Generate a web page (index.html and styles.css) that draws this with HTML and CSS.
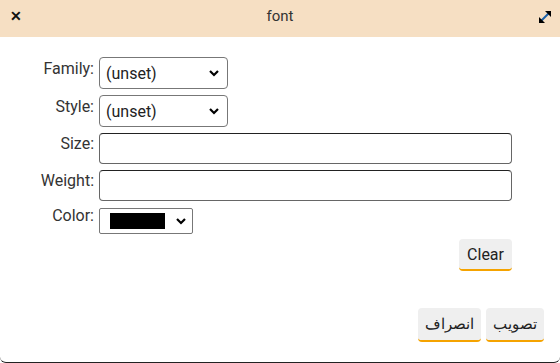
FILE: index.html
```html
<!DOCTYPE html>
<html lang="en">
<head>
    <meta charset="UTF-8">
    <title>font</title>
    <link rel="stylesheet" href="styles.css">
</head>
<body>
    <div class="dialog">
        <div class="titlebar">
            <span class="close">&#x2715;</span>
            <span class="title">font</span>
            <svg class="expand" width="14" height="14" viewBox="0 0 14 14">
                <path d="M3 11 L11 3" stroke="#1a5fa8" stroke-width="2"/>
                <path d="M1 13 L1 7 L7 13 Z" fill="#000"/>
                <path d="M13 1 L13 7 L7 1 Z" fill="#000"/>
            </svg>
        </div>
        <div class="content">
            <div class="form">
                <label for="family">Family:</label>
                <select id="family" class="sel"><option>(unset)</option></select>
                <label for="style">Style:</label>
                <select id="style" class="sel"><option>(unset)</option></select>
                <label for="size">Size:</label>
                <input type="text" id="size" class="txt">
                <label for="weight">Weight:</label>
                <input type="text" id="weight" class="txt">
                <label>Color:</label>
                <div class="color-sel"><span class="swatch"></span></div>
            </div>
            <div class="clear-row">
                <button class="btn">Clear</button>
            </div>
        </div>
        <div class="footer">
            <button class="btn" dir="rtl">انصراف</button>
            <button class="btn" dir="rtl">تصويب</button>
        </div>
    </div>
</body>
</html>
```

FILE: styles.css
```css
body {
    margin: 0;
    font-family: Roboto, "Noto Sans", sans-serif;
    background: #fff;
}
.dialog {
    width: 560px;
    height: 363px;
    display: flex;
    flex-direction: column;
    box-sizing: border-box;
    border-bottom: 1px solid #222;
    border-radius: 0 0 6px 6px;
}
.titlebar {
    height: 37px;
    background: #f6dfc3;
    display: flex;
    align-items: center;
    justify-content: space-between;
    padding: 0 8px 6px 10px;
    box-sizing: border-box;
}
.close {
    font-size: 14px;
    font-weight: bold;
    color: #111;
}
.title {
    font-size: 15px;
    color: #333;
}
.expand {
    margin-top: 2px;
}
.content {
    padding: 20px 48px 0 20px;
}
.form {
    display: grid;
    grid-template-columns: 74px 1fr;
    column-gap: 5px;
    row-gap: 6px;
    align-items: center;
}
label {
    text-align: right;
    font-size: 16px;
    color: #333;
    margin-top: -10px;
}
.sel {
    appearance: none;
    width: 129px;
    height: 32px;
    font-family: inherit;
    font-size: 16px;
    color: #222;
    padding: 0 6px;
    border: 1px solid #777;
    border-radius: 4px;
    background: #fff url("data:image/svg+xml,%3Csvg xmlns='http://www.w3.org/2000/svg' width='10' height='7'%3E%3Cpath d='M1 1 L5 5 L9 1' stroke='%23000' stroke-width='2.2' fill='none'/%3E%3C/svg%3E") no-repeat right 8px center;
}
.txt {
    height: 31px;
    box-sizing: border-box;
    border: 1px solid #666;
    border-top-color: #222;
    border-radius: 4px;
}
.color-sel {
    width: 94px;
    height: 26px;
    box-sizing: border-box;
    border: 1px solid #777;
    border-radius: 2px;
    display: flex;
    align-items: center;
    padding-left: 10px;
    margin-top: 1px;
    background: #fff url("data:image/svg+xml,%3Csvg xmlns='http://www.w3.org/2000/svg' width='10' height='7'%3E%3Cpath d='M1 1 L5 5 L9 1' stroke='%23000' stroke-width='2.2' fill='none'/%3E%3C/svg%3E") no-repeat right 6px center;
}
.swatch {
    width: 55px;
    height: 16px;
    background: #000;
}
.clear-row {
    display: flex;
    justify-content: flex-end;
    margin-top: 5px;
}
.btn {
    font-family: inherit;
    font-size: 16px;
    color: #222;
    background: #efefef;
    border: none;
    border-bottom: 2px solid #f5a300;
    border-radius: 4px;
    padding: 0 8px;
    height: 32px;
}
.footer {
    margin-top: auto;
    display: flex;
    justify-content: flex-end;
    gap: 5px;
    padding: 0 16px 20px 0;
}
.footer .btn {
    font-size: 15px;
    height: 34px;
    padding: 0 7px;
}
```
